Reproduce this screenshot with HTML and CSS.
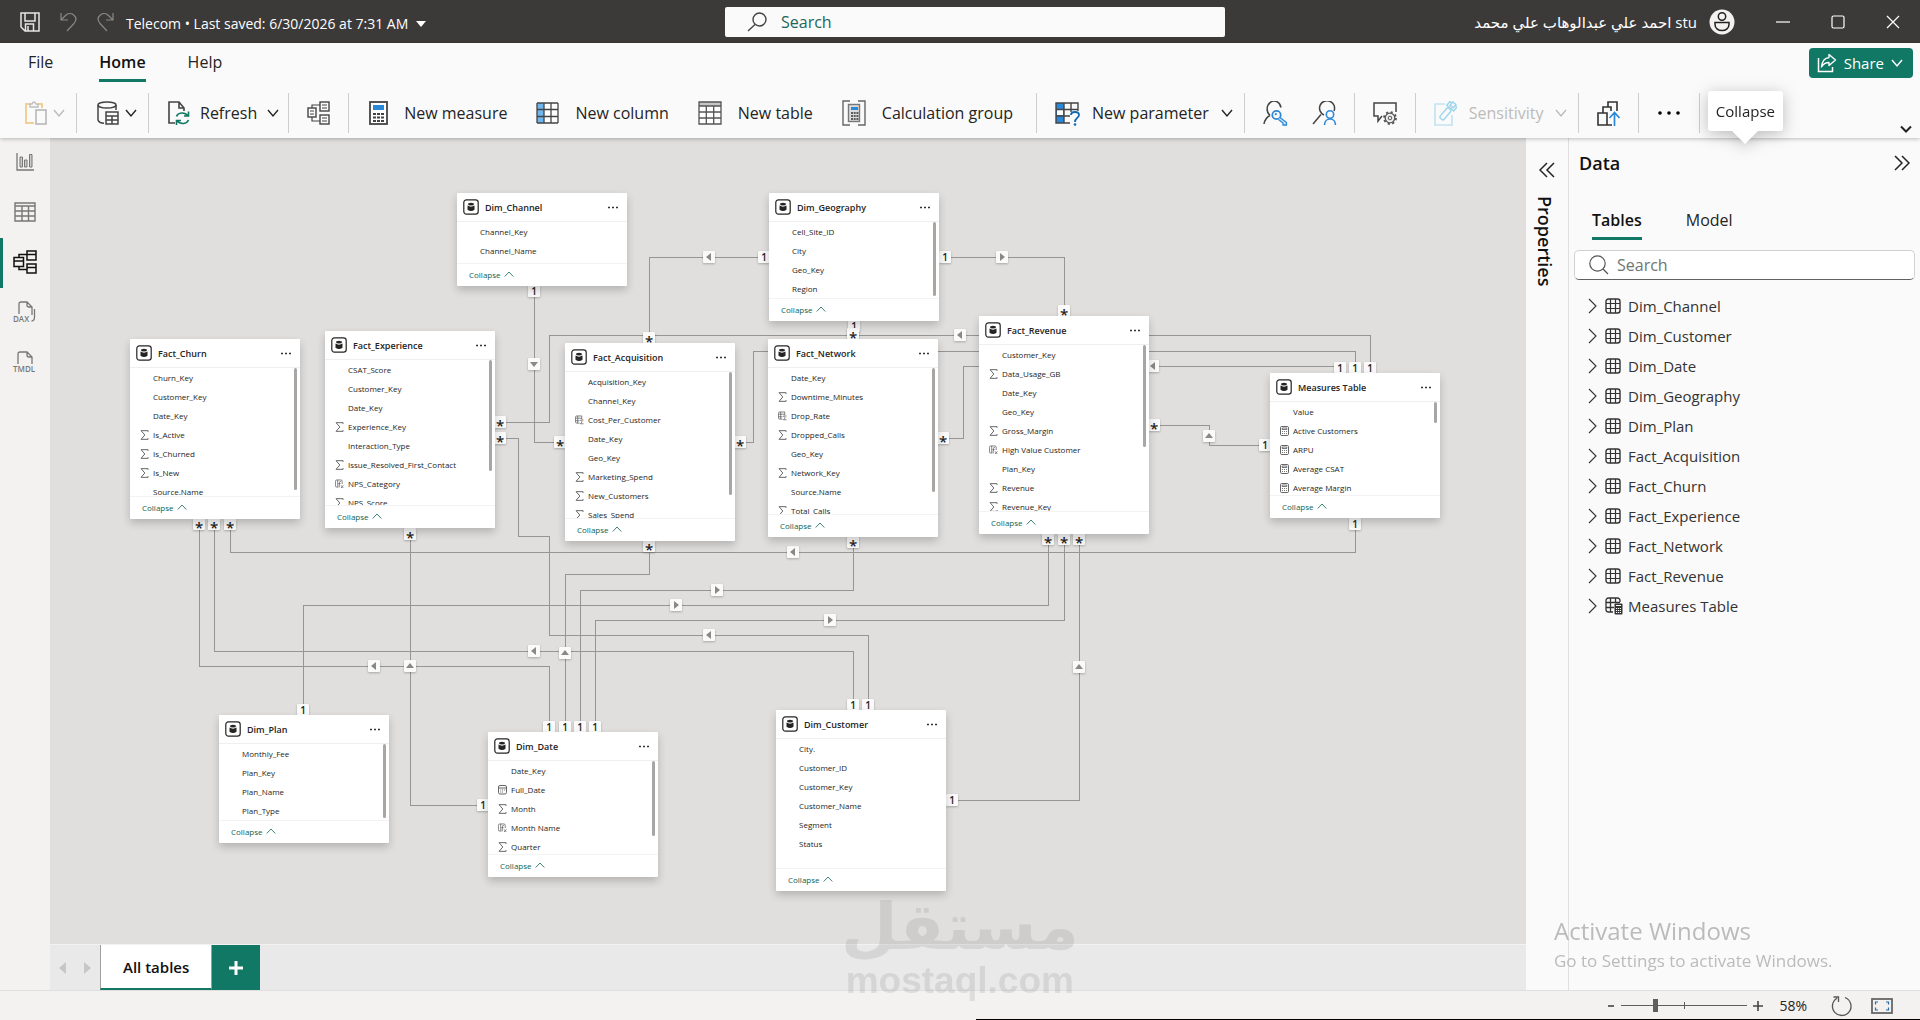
FILE: index.html
```html
<!DOCTYPE html>
<html lang="en">
<head>
  <meta charset="UTF-8"/>
  <meta name="viewport" content="width=device-width,initial-scale=1.0"/>
  <title>Telecom - Model view</title>
  <link rel="stylesheet" href="styles.css">
</head>
<body>

  <!-- icons used more than once -->
  <svg class="sprite" aria-hidden="true">
    <symbol id="i-down" viewBox="0 0 12 12"><path d="M1 3l5 6 5-6" fill="none" stroke="currentColor" stroke-width="1.4"/></symbol>
    <symbol id="i-right" viewBox="0 0 10 16"><path d="M1 1l7 7-7 7" fill="none" stroke="currentColor" stroke-width="1.1"/></symbol>
    <symbol id="i-up" viewBox="0 0 10 6"><path d="M.7 5.5L5 1l4.3 4.5" fill="none" stroke="currentColor" stroke-width=".8"/></symbol>
    <symbol id="i-chevrons" viewBox="0 0 16 16"><path d="M1 1l7 7-7 7M8 1l7 7-7 7" fill="none" stroke="currentColor" stroke-width="1.5"/></symbol>
    <symbol id="i-grid" viewBox="0 0 16 16"><rect x="1" y="1" width="14" height="14" rx="2.5" fill="none" stroke="currentColor" stroke-width="1.4"/><path d="M5.500 1v14M10.500 1v14M1 5.500h14M1 10.500h14" fill="none" stroke="currentColor" stroke-width="1.2"/></symbol>
    <symbol id="i-grid-calc" viewBox="0 0 18 18"><path d="M8 15H3.500A2.500 2.500 0 0 1 1 12.500v-9A2.500 2.500 0 0 1 3.500 1h9A2.500 2.500 0 0 1 15 3.500V5M5.500 1v14M10.500 1v5M1 5.500h14M1 10.500h8" fill="none" stroke="currentColor" stroke-width="1.3"/><rect x="9.500" y="6.500" width="8" height="11" rx="1" fill="#333"/><path d="M11 8.500h5M11 11.500h1.200m.8 0h1.200m.8 0H16M11 13.500h1.200m.8 0h1.200m.8 0H16M11 15.500h1.200m.8 0h1.200m.8 0H16" stroke="#fff" stroke-width="1.1"/></symbol>
    <symbol id="i-table" viewBox="0 0 16 16"><rect x=".8" y=".8" width="14.400" height="14.400" rx="2.6" fill="none" stroke="currentColor" stroke-width="1.2"/><path d="M5 5.300a3 1.500 0 0 1 6 0 3 1.300 0 0 1-6 0zM4.500 6.600q3.500 2.200 7 0v4.200q-3.500 2.400-7 0z" fill="currentColor"/></symbol>
    <symbol id="i-sum" viewBox="0 0 8 9"><path d="M7.200 1.700V.6H.9L4.300 4.500.9 8.400h6.300V7.300" fill="none" stroke="currentColor" stroke-width=".8"/></symbol>
    <symbol id="i-calc" viewBox="0 0 9 10"><rect x=".5" y=".5" width="8" height="9" rx="1.2" fill="none" stroke="currentColor" stroke-width=".9"/><path d="M2.200 2h4.600v1.500H2.200zM2 5.500h1m1 0h1m1 0h1M2 7.500h1m1 0h1m1 0h1" fill="none" stroke="currentColor" stroke-width=".8"/></symbol>
    <symbol id="i-sumcol" viewBox="0 0 10 10"><path d="M5 8.500H2A1.500 1.500 0 0 1 .5 7V2A1.500 1.500 0 0 1 2 .5h5.500V4M3 .5v8M.5 3h7M.5 5.800H5M9.500 5H6l2 2-2 2.200h3.500" fill="none" stroke="currentColor" stroke-width=".8"/></symbol>
    <symbol id="i-fx" viewBox="0 0 10 10"><path d="M3 .5H2A1.500 1.500 0 0 0 .5 2v5A1.500 1.500 0 0 0 2 8.500h1v-8M3 .5h3.500A1.500 1.500 0 0 1 8 2v3M6.500 2.200Q5 1.800 5 3.500L4.500 9M3.800 4.500H6.200M6.700 6.500l2.600 3M9.300 6.500l-2.600 3" fill="none" stroke="currentColor" stroke-width=".8"/></symbol>
    <symbol id="i-date" viewBox="0 0 9 10"><rect x=".5" y=".5" width="8" height="8.500" rx="1.5" fill="none" stroke="currentColor" stroke-width=".9"/><path d="M.5 3h8M2.300 5h.9m.9 0H5m.9 0h.9M2.300 7h.9m.9 0H5" stroke="currentColor" stroke-width=".9"/></symbol>
  </svg>

  <header class="titlebar">
    <div class="quick">
      <button aria-label="Save"><svg width="20" height="20" viewBox="0 0 20 20"><path d="M1 1h18v18H5l-4-4zM5 1v8h10V1M5.500 19v-7h8v7M8 14v5" fill="none" stroke="#e6e6e6" stroke-width="1.5"/></svg></button>
      <button aria-label="Undo"><svg width="17" height="20" viewBox="0 0 17 20"><path d="M1 1v7h7M1.500 7.500l4-4c5-5 14 1 8.500 8L7 19" fill="none" stroke="#8a8886" stroke-width="1.2"/></svg></button>
      <button aria-label="Redo"><svg width="17" height="20" viewBox="0 0 17 20"><path d="M16 1v7H9M15.500 7.500l-4-4c-5-5-14 1-8.500 8l7 7.500" fill="none" stroke="#8a8886" stroke-width="1.2"/></svg></button>
      <button class="doc-name">Telecom • Last saved: 6/30/2026 at 7:31 AM <svg width="10" height="6" viewBox="0 0 10 6"><path d="M0 0h10L5 6z" fill="#fff"/></svg></button>
    </div>
    <label class="top-search">
      <svg width="20" height="20" viewBox="0 0 20 20"><circle cx="12.500" cy="7.500" r="6.500" fill="none" stroke="#444" stroke-width="1.4"/><path d="M8 12.500L1 19" stroke="#444" stroke-width="1.4"/></svg>
      <input type="text" placeholder="Search" aria-label="Search">
    </label>
    <div class="account">
      <span class="user" dir="ltr">‎احمد علي عبدالوهاب علي محمد stu</span>
      <svg width="26" height="26" viewBox="0 0 26 26"><circle cx="13" cy="13" r="12.500" fill="#f3f2f1"/><circle cx="13" cy="7.500" r="3.700" fill="none" stroke="#222" stroke-width="1.5"/><path d="M6 13.500h14v2c0 3.500-3 6-7 6s-7-2.500-7-6z" fill="none" stroke="#222" stroke-width="1.5"/></svg>
      <button aria-label="Minimize"><svg width="14" height="14" viewBox="0 0 14 14"><path d="M0 7h14" stroke="#fff" stroke-width="1.2"/></svg></button>
      <button aria-label="Maximize"><svg width="14" height="14" viewBox="0 0 14 14"><rect x="1" y="1" width="12" height="12" rx="1.5" fill="none" stroke="#fff" stroke-width="1.2"/></svg></button>
      <button aria-label="Close"><svg width="14" height="14" viewBox="0 0 14 14"><path d="M1 1l12 12M13 1L1 13" stroke="#fff" stroke-width="1.2"/></svg></button>
    </div>
  </header>

  <div class="ribbon">
    <nav class="menu">
      <a href="#file">File</a>
      <a href="#home" class="active">Home</a>
      <a href="#help">Help</a>
      <button class="share">
        <svg width="20" height="20" viewBox="0 0 20 20"><path d="M1.500 5v13.500h14V14" fill="none" stroke="#fff" stroke-width="1.5"/><path d="M12 1.500l6.500 5.500-6.500 5.500V9.500c-3.500 0-5.500 1-7.500 4.500C5 8.500 7.500 5 12 4.600z" fill="none" stroke="#fff" stroke-width="1.4" stroke-linejoin="round"/></svg>
        Share
        <svg class="down"><use href="#i-down"/></svg>
      </button>
    </nav>

    <div class="toolbar">
      <div class="group first off">
        <button aria-label="Paste">
          <svg width="22" height="24" viewBox="0 0 22 24"><path d="M9 22H1V3h4M13 3h4v4" fill="none" stroke="#f2cf94" stroke-width="2"/><path d="M5 6V3h2q2-4 4 0h2v3z" fill="none" stroke="#bdbdbd" stroke-width="1.3"/><rect x="11" y="9" width="10" height="14" fill="#fafafa" stroke="#b3b3b3" stroke-width="1.5"/></svg>
          <svg class="down"><use href="#i-down"/></svg>
        </button>
      </div>
      <div class="group tight">
        <button aria-label="Get data">
          <svg width="22" height="24" viewBox="0 0 22 24"><g fill="none" stroke="#444" stroke-width="1.5"><ellipse cx="10" cy="4" rx="9" ry="3"/><path d="M1 4v15q1 3 6 3.300M19 4v5"/><path d="M9 11h12v12H9zM9 15h12M9 19h12M15 15v8" fill="#fafafa"/></g></svg>
          <svg class="down"><use href="#i-down"/></svg>
        </button>
      </div>
      <div class="group snug">
        <button>
          <svg width="22" height="25" viewBox="0 0 22 25"><path d="M7 22H1V1h10l5 6v3M11 1v6h5" fill="none" stroke="#444" stroke-width="1.6"/><path d="M8.500 15.500c1.500-4 8-5 11.500-.5M20.500 10.500V15H16M20.500 19c-1.500 4-8 5-11.500.5M8.500 24v-4.500H13" fill="none" stroke="#117865" stroke-width="1.6"/></svg>
          <span>Refresh</span>
          <svg class="down"><use href="#i-down"/></svg>
        </button>
      </div>
      <div class="group">
        <button aria-label="Manage relationships">
          <svg width="23" height="24" viewBox="0 0 23 24"><g fill="none" stroke="#444" stroke-width="1.4"><rect x="1" y="7" width="8" height="9"/><rect x="13" y="1" width="9" height="9"/><rect x="13" y="14" width="9" height="9"/><path d="M5 7V4h8M5 16v4h8M3 10h4M3 13h4M15 4h5M15 7h5M15 17h5M15 20h5" stroke-width="1.2"/></g></svg>
        </button>
      </div>
      <div class="group wide">
        <button>
          <svg width="19" height="24" viewBox="0 0 19 24"><rect x="1" y="1" width="17" height="22" fill="#fff" stroke="#444" stroke-width="1.8"/><rect x="4" y="4" width="11" height="5" fill="#2b88d8"/><path d="M4 13h3m1 0h3m1 0h3M4 16.500h3m1 0h3m1 0h3M4 20h3m1 0h3m1 0h3" stroke="#444" stroke-width="2.2"/></svg>
          <span>New measure</span>
        </button>
        <button>
          <svg width="23" height="22" viewBox="0 0 23 22"><rect x="1" y="1" width="21" height="20" fill="#fff"/><rect x="1" y="1" width="7" height="20" fill="#71b7ee"/><path d="M1 1v20M8 1v20M15 1v20M22 1v20M1 1h21M1 7.500h21M1 14.500h21M1 21h21" stroke="#444" stroke-width="1.3"/></svg>
          <span>New column</span>
        </button>
        <button>
          <svg width="24" height="24" viewBox="0 0 24 24"><rect x="1" y="1" width="22" height="22" fill="#fff"/><rect x="1" y="1" width="22" height="4" fill="#c8c6c4"/><path d="M1 1h22v22H1zM1 5h22M1 11h22M1 17h22M8.300 5v18M15.700 5v18" fill="none" stroke="#555" stroke-width="1.3"/></svg>
          <span>New table</span>
        </button>
        <button>
          <svg width="24" height="26" viewBox="0 0 24 26"><path d="M8 1H1v24h7M16 1h7v24h-7" fill="none" stroke="#666" stroke-width="1.4"/><rect x="6.500" y="4.500" width="11" height="17" fill="#ddd" stroke="#777" stroke-width="1.4"/><rect x="9" y="7" width="7" height="3" fill="#2b88d8"/><path d="M9 13h2m.7 0h2m.7 0h2M9 16h2m.7 0h2m.7 0h2M9 19h2m.7 0h2m.7 0h2" stroke="#333" stroke-width="1.7"/></svg>
          <span>Calculation group</span>
        </button>
      </div>
      <div class="group mid">
        <button>
          <svg width="25" height="25" viewBox="0 0 25 25"><rect x="1" y="2" width="8" height="20" fill="#2b88d8"/><rect x="2" y="9" width="6" height="5" fill="#fff"/><path d="M15 22H1V2h22v8M9 2v20M16 2v9M1 8.500h22M1 15h14" fill="none" stroke="#444" stroke-width="1.4"/><path d="M16 14c0-4 8-4 8 0 0 3-4 3-4 7" fill="none" stroke="#1168b3" stroke-width="1.8"/><circle cx="20" cy="23.500" r="1.300" fill="#1168b3"/></svg>
          <span>New parameter</span>
          <svg class="down"><use href="#i-down"/></svg>
        </button>
      </div>
      <div class="group pair">
        <button aria-label="Manage roles">
          <svg width="25" height="25" viewBox="0 0 25 25"><path d="M7 14.500a7 8 0 1 1 11-8M7 14.500Q2 17 1 23" fill="none" stroke="#444" stroke-width="1.5"/><circle cx="13.500" cy="14" r="4.200" fill="#fafafa" stroke="#2b88d8" stroke-width="1.8"/><path d="M17 16.500l6.500 5V24H20v-2l-4.500-3.500" fill="#cfe6f8" stroke="#2b88d8" stroke-width="1.3"/><circle cx="12.800" cy="13.200" r="1.100" fill="#2b88d8"/></svg>
        </button>
        <button aria-label="View as">
          <svg width="25" height="25" viewBox="0 0 25 25"><path d="M9 13.500L1 23M12 14A7.500 7.500 0 1 1 22 10" fill="none" stroke="#444" stroke-width="1.5"/><circle cx="18" cy="13.500" r="3.700" fill="none" stroke="#2b88d8" stroke-width="1.6"/><path d="M12.500 24c0-8 11-8 11 0" fill="none" stroke="#2b88d8" stroke-width="1.6"/></svg>
        </button>
      </div>
      <div class="group">
        <button aria-label="Q&amp;A setup">
          <svg width="24" height="24" viewBox="0 0 24 24"><path d="M9 15l-4 5v-5H1V2h22v9" fill="none" stroke="#444" stroke-width="1.5"/><circle cx="17" cy="17" r="4.800" fill="#eee" stroke="#555" stroke-width="1.3"/><circle cx="17" cy="17" r="1.800" fill="none" stroke="#555"/><circle cx="17" cy="17" r="6" fill="none" stroke="#555" stroke-width="1.8" stroke-dasharray="2.2 2.5"/></svg>
        </button>
      </div>
      <div class="group mid off">
        <button disabled>
          <svg width="23" height="25" viewBox="0 0 23 25"><path d="M11 3H1v21h17V14" fill="none" stroke="#c3e3ef" stroke-width="1.7"/><g transform="rotate(40 13 11)" fill="none" stroke="#9fd6ec" stroke-width="1.5"><rect x="10.500" y="7" width="5" height="13" rx="1.500"/><path d="M8.500 6V1h2.500v3h4V1h2.500v5zM11 1v-1.500h4V1"/></g></svg>
          <span>Sensitivity</span>
          <svg class="down"><use href="#i-down"/></svg>
        </button>
      </div>
      <div class="group">
        <button aria-label="Publish">
          <svg width="23" height="25" viewBox="0 0 23 25"><path d="M10 12H1v12h9zM6 12V6h8v4M11 6V1h9v9M10 12v12h5M10 24V12" fill="none" stroke="#333" stroke-width="1.6"/><path d="M17.500 25V12M12.500 17l5-5.500 5 5.500" fill="none" stroke="#2b88d8" stroke-width="1.7"/></svg>
        </button>
      </div>
      <div class="group">
        <button aria-label="More options"><svg width="24" height="6" viewBox="0 0 24 6"><circle cx="3" cy="3" r="1.800"/><circle cx="12" cy="3" r="1.800"/><circle cx="21" cy="3" r="1.800"/></svg></button>
      </div>
      <button class="fold" aria-label="Fold ribbon"><svg width="12" height="8" viewBox="0 0 12 8"><path d="M1 1.500l5 5 5-5" fill="none" stroke="#222" stroke-width="2"/></svg></button>
    </div>
    <div class="tooltip" role="tooltip">Collapse</div>
  </div>

  <main class="main">
    <nav class="rail">
      <a href="#report" aria-label="Report view"><svg width="18" height="18" viewBox="0 0 18 18"><path d="M1 0v17h17" fill="none" stroke="#777" stroke-width="1.3"/><path d="M4 4h2.500v10H4zM8.500 7H11v7H8.500zM13.500 1.500H16V14h-2.500z" fill="#ccc" stroke="#777"/></svg></a>
      <a href="#table" aria-label="Table view"><svg width="22" height="20" viewBox="0 0 22 20"><path d="M1 1h20v18H1zM1 4h20M1 9h20M1 14h20M8 4v15M14.500 4v15" fill="none" stroke="#777" stroke-width="1.4"/></svg></a>
      <a href="#model" class="active" aria-label="Model view"><svg width="24" height="24" viewBox="0 0 24 24"><path d="M1 7.500h9.500v9H1zM1 11h9.500M14 1h9v9h-9zM14 4.500h9M14 14h9v9h-9zM14 17.500h9M6 7.500v-3h8M6 16.500v3h8" fill="none" stroke="#111" stroke-width="1.5"/></svg></a>
      <a href="#dax" aria-label="DAX query view"><svg width="24" height="22" viewBox="0 0 24 22"><path d="M6 13V3q0-2 2-2h6l5 5v8M14 1v3q0 2 2 2h3M21.500 8v8q0 4-3 4" fill="none" stroke="#777" stroke-width="1.3"/><text x="0" y="21">DAX</text></svg></a>
      <a href="#tmdl" aria-label="TMDL view"><svg width="24" height="22" viewBox="0 0 24 22"><path d="M5 13V3q0-2 2-2h7l5 5v7M14 1v3q0 2 2 2h3" fill="none" stroke="#777" stroke-width="1.3"/><text x="0" y="21">TMDL</text></svg></a>
    </nav>

    <section class="workspace">
      <div class="canvas" id="canvas">
        <svg class="wires" id="wires"></svg>
      </div>
      <div class="sheets">
        <button class="step" aria-label="Previous"><svg width="7" height="12" viewBox="0 0 7 12"><path d="M7 0v12L0 6z"/></svg></button>
        <button class="step" aria-label="Next"><svg width="7" height="12" viewBox="0 0 7 12"><path d="M0 0v12l7-6z"/></svg></button>
        <button class="sheet">All tables</button>
        <button class="add" aria-label="Add layout"><svg width="14" height="14" viewBox="0 0 14 14"><path d="M7 0v14M0 7h14" stroke="#fff" stroke-width="3"/></svg></button>
      </div>
    </section>

    <aside class="props">
      <button aria-label="Expand properties"><svg class="flip" width="16" height="16"><use href="#i-chevrons"/></svg></button>
      <h2>Properties</h2>
    </aside>

    <aside class="data">
      <div class="data-head">
        <h2>Data</h2>
        <button aria-label="Collapse pane"><svg width="16" height="16"><use href="#i-chevrons"/></svg></button>
      </div>
      <div class="data-tabs">
        <a href="#tables" class="active">Tables</a>
        <a href="#model-tab">Model</a>
      </div>
      <label class="data-search">
        <svg width="20" height="20" viewBox="0 0 20 20"><circle cx="8.500" cy="8.500" r="7.700" fill="none" stroke="#555" stroke-width="1.2"/><path d="M14 14l5 5" stroke="#555" stroke-width="1.3"/></svg>
        <input type="text" placeholder="Search" aria-label="Search tables">
      </label>
      <ul class="tree" id="tree"></ul>
    </aside>
  </main>

  <footer class="status">
    <button aria-label="Zoom out"><svg width="8" height="12" viewBox="0 0 8 12"><path d="M1 6h6" stroke="#444" stroke-width="1.6"/></svg></button>
    <input type="range" min="0" max="100" value="26" aria-label="Zoom">
    <button aria-label="Zoom in"><svg width="10" height="12" viewBox="0 0 10 12"><path d="M0 6h10M5 1v10" stroke="#444" stroke-width="1.6"/></svg></button>
    <output>58%</output>
    <button aria-label="Reset zoom"><svg width="22" height="22" viewBox="0 0 22 22"><path d="M14 2.500A9.300 9.300 0 1 1 6 3.200M2.500 2h5v5" fill="none" stroke="#555" stroke-width="1.3"/></svg></button>
    <button aria-label="Fit to page"><svg width="22" height="16" viewBox="0 0 22 16"><rect x="1" y="1" width="20" height="14" fill="none" stroke="#666" stroke-width="1.8"/><path d="M4.500 6.500V4H7M15 4h2.500v2.500M17.500 9.500V12H15M7 12H4.500V9.500" fill="none" stroke="#2b6ca8" stroke-width="1.2"/></svg></button>
  </footer>

  <div class="brand">
    <span class="brand-ar" lang="ar">مستقل</span>
    <span class="brand-en">mostaql.com</span>
  </div>
  <div class="activate">
    <p class="activate-title">Activate Windows</p>
    <p>Go to Settings to activate Windows.</p>
  </div>

  <script src="script.js"></script>
</body>
</html>
```
FILE: styles.css
```css
:root {
  --green:  #117865;
  --dark:   #3b3a39;
  --pane:   #fafafa;
  --rail:   #f3f2f1;
  --canvas: #e0dfde;
  --line:   #e1dfdd;
  --fg:     #252423;
}
*,*::before,*::after { box-sizing:border-box; margin:0; padding:0 }
body {
  height:100vh;
  display:flex; flex-direction:column;
  overflow:hidden;
  background:var(--pane);
  color:var(--fg);
  font-family:"Open Sans", "Noto Sans", sans-serif;
  font-size:16px;
}
button {
  display:flex; align-items:center;
  border:none; background:none;
  font:inherit; color:inherit; cursor:pointer;
}
a { color:inherit; text-decoration:none }
ul { list-style:none }
input { font:inherit; border:none; background:none; outline:none; min-width:0 }
svg { flex:none; display:block }
h2 { font-size:18px; line-height:24px; font-weight:600; color:#111 }
.sprite { position:absolute; width:0; height:0 }
.down { width:12px; height:12px }

/* title bar */
.titlebar {
  flex:none;
  display:grid; grid-template-columns:705fr 500px 675fr;
  align-items:center;
  height:43px;
  padding:0 20px;
  background:var(--dark);
  color:#fff;
  font-size:14px;
}
.quick { display:flex; align-items:center; gap:20px }
.doc-name { gap:8px; padding-top:4px; margin-left:-8px; white-space:nowrap }
.top-search {
  display:flex; align-items:center; gap:14px;
  height:30px; padding:0 22px;
  background:var(--pane); border-radius:2px;
}
.top-search input { flex:1 }
.top-search input { font-size:16px }
.top-search input::placeholder { color:#1c665a; opacity:1 }
.account { display:flex; align-items:center; justify-content:flex-end; gap:41px }
.account .user { margin-right:-29px; font-size:15px; font-family:"Open Sans", "DejaVu Sans", sans-serif; white-space:nowrap }

/* ribbon */
.ribbon {
  position:relative; z-index:5;
  flex:none; height:95px;
  background:var(--pane);
  box-shadow:0 1px 4px rgba(0,0,0,.25);
}
.menu {
  display:flex; align-items:center; gap:42px;
  height:40px; padding:0 7px 0 28px;
  color:var(--fg);
}
.menu a { padding:6px 0; border-bottom:3px solid transparent }
.menu a:first-child { margin-right:4px }
.menu .active { border-color:var(--green); font-weight:600; color:#111 }
.share {
  gap:7px; height:30px; margin-left:auto; padding:0 10px 0 8px;
  background:var(--green); color:#fff;
  border-radius:4px; font-size:15px;
}
.toolbar { display:flex; align-items:center; height:55px; padding:5px 8px 0 0 }
.group {
  display:flex; align-items:center; gap:29px;
  height:40px; padding:0 18px;
  border-right:1px solid #d0cecc;
}
.group button { gap:13px; white-space:nowrap }
.group.first { padding:0 11px 0 25px }
.group.first button, .group.tight button { gap:6px }
.group.tight { padding:0 11px 0 20px }
.group.snug { padding:0 9px 0 19px }
.group.snug button { gap:10px }
.group.wide { padding:0 23px 0 20px }
.group.wide button { gap:16px }
.group.mid { padding:0 11px 0 18px }
.group.mid button { gap:12px }
.group.pair { padding:0 17px 0 18px; gap:24px }
.group.off { color:#bdbbb9 }
.fold { align-self:flex-end; margin-left:auto; padding-bottom:5px }
.tooltip {
  position:absolute; right:137px; top:48px;
  padding:8px 8px;
  background:#fff; border-radius:3px;
  line-height:24px; font-size:15px;
  filter:drop-shadow(0 3px 8px rgba(0,0,0,.25));
}
.tooltip::after {
  content:""; position:absolute; left:50%; top:100%;
  margin-left:-13px;
  border:13px solid transparent; border-top-color:#fff; border-bottom:none;
}

/* layout */
.main { flex:1; display:flex; min-height:0 }
.rail { flex:none; width:50px; background:var(--rail) }
.rail a {
  display:flex; align-items:center; justify-content:center;
  height:50px; border-left:3px solid transparent; padding:0 3px 3px 0;
}
.rail a.active { border-color:var(--green) }
.rail svg { overflow:visible }
.rail text { font-size:8px; font-weight:600; fill:#777 }
.workspace { flex:1; display:flex; flex-direction:column; min-width:0 }
.canvas { position:relative; flex:1; overflow:hidden; background:var(--canvas) }
.wires { position:absolute; left:0; top:0; width:100%; height:100% }
.wires path { fill:none; stroke:#979593; shape-rendering:crispEdges }
.wires rect { fill:#fafafa; filter:drop-shadow(0 1px 1px rgba(0,0,0,.25)) }
.wires text { font-size:10px; font-weight:600; text-anchor:middle; fill:#252423 }
.wires text.star { font-size:15px }
.wires polygon { fill:#8a8886 }

/* table cards */
.card {
  position:absolute;
  width:170px;
  display:flex; flex-direction:column;
  background:#fff; border-radius:1px;
  box-shadow:0 4px 9px rgba(0,0,0,.2);
}
.card header {
  display:flex; align-items:center; gap:6px;
  height:29px; padding:0 9px 0 6px;
  border-bottom:1px solid #efefef;
}
.card h3 { flex:1; font-size:9px; line-height:12px; font-weight:600; padding-top:1px }
.card .body { flex:1; display:flex; min-height:0; padding-right:3px }
.card ul { flex:1; overflow:hidden; padding-left:10px }
.card li {
  display:flex; align-items:center; gap:4px;
  height:19px; font-size:8px; white-space:nowrap; color:#252423;
}
.card li svg, .card li i { flex:none; width:9px; height:10px; color:#555 }
.card .bar { width:3px; background:#a8a6a4; border-radius:2px }
.card footer { height:23px; padding-left:12px; border-top:1px solid #f3f3f3 }
.card footer button { gap:3px; height:20px; font-size:8px; color:#0b6354 }

/* layout tabs */
.sheets {
  display:flex; flex:none; height:46px;
  background:#e9e9e9; border-top:1px solid #f3f2f1;
}
.step { width:25px; justify-content:center; fill:#c8c6c4 }
.sheet {
  padding:0 22px; background:#fff;
  border:1px solid #a19f9d; border-width:0 1px 2px; border-bottom-color:var(--green);
  font-size:15px; font-weight:600; color:#111;
}
.add { width:48px; justify-content:center; background:var(--green) }

/* side panes */
.props {
  flex:none; width:43px;
  display:flex; flex-direction:column; align-items:center; gap:18px;
  padding-top:24px;
  border-right:1px solid var(--line);
}
.props h2 { writing-mode:vertical-rl; margin-right:4px }
.flip { transform:scaleX(-1) }
.data { flex:none; width:351px; padding:0 5px }
.data-head {
  display:flex; justify-content:space-between; align-items:center;
  height:50px; padding:0 5px;
}
.data-tabs { display:flex; gap:44px; padding:14px 18px 10px }
.data-tabs a { height:38px; line-height:36px; border-bottom:3px solid transparent }
.data-tabs .active { border-color:var(--green); font-weight:600; color:#111 }
.data-search {
  display:flex; align-items:center; gap:8px;
  height:30px; padding:0 14px;
  background:#fff;
  border:1px solid #d1d1d1; border-bottom-color:#616161; border-radius:5px;
}
.data-search input { flex:1 }
.data-search input::placeholder { color:#6d7674; opacity:1 }
.tree { padding:11px 14px }
.tree button { height:30px; gap:7px; font-size:15px; color:#333 }
.tree .chev { width:10px; height:16px }
.tree .ico { width:16px; height:16px }
.tree .ico.big { width:18px; height:18px; margin-right:-2px }

/* status bar */
.status {
  position:relative;
  flex:none; height:30px;
  display:flex; align-items:center; justify-content:flex-end; gap:6px;
  padding-right:27px;
  background:var(--rail); border-top:1px solid var(--line);
  font-size:14px;
}
.status::after {
  content:""; position:absolute; right:0; bottom:0;
  width:944px; height:1px; background:#000;
}
.status output { margin:0 18px 0 10px }
.status button + button { margin-left:12px }
.status input {
  appearance:none; width:126px; height:14px;
  background:
    linear-gradient(#605e5c,#605e5c) 50% 50%/1px 7px no-repeat,
    linear-gradient(#605e5c,#605e5c) 50% 50%/100% 1px no-repeat;
}
.status input::-webkit-slider-thumb {
  appearance:none; width:5px; height:13px; background:#605e5c;
}

/* marks laid over the window */
.brand, .activate { position:fixed; z-index:10; pointer-events:none }
.brand {
  left:44%; bottom:18px; width:230px;
  display:flex; flex-direction:column; align-items:center;
  white-space:nowrap;
  color:#777; opacity:.17;
}
.brand-ar { font:bold 65px/66px "DejaVu Sans", sans-serif }
.brand-en { font:bold 37px/42px "Liberation Sans", sans-serif }
.activate { right:60px; bottom:47px; width:306px; color:#bbb; font-size:17px; line-height:24px }
.activate-title { font-size:24px; line-height:36px }
```
FILE: script.js
```js
// field prefix: s = sum, c = sum column, f = fx column, m = measure, d = date
const tables = [
  { name:'Dim_Channel', x:407, y:55, h:93, bar:0, fields:['Channel_Key','Channel_Name'] },
  { name:'Dim_Geography', x:719, y:55, h:128, bar:74, fields:['Cell_Site_ID','City','Geo_Key','Region'] },
  { name:'Fact_Churn', x:80, y:201, h:180, bar:122,
    fields:['Churn_Key','Customer_Key','Date_Key','s:Is_Active','s:Is_Churned','s:Is_New','Source.Name'] },
  { name:'Fact_Experience', x:275, y:193, h:197, bar:111,
    fields:['CSAT_Score','Customer_Key','Date_Key','s:Experience_Key','Interaction_Type','s:Issue_Resolved_First_Contact','f:NPS_Category','s:NPS_Score'] },
  { name:'Fact_Acquisition', x:515, y:205, h:198, bar:123,
    fields:['Acquisition_Key','Channel_Key','c:Cost_Per_Customer','Date_Key','Geo_Key','s:Marketing_Spend','s:New_Customers','s:Sales_Spend'] },
  { name:'Fact_Network', x:718, y:201, h:198, bar:124,
    fields:['Date_Key','s:Downtime_Minutes','c:Drop_Rate','s:Dropped_Calls','Geo_Key','s:Network_Key','Source.Name','s:Total_Calls'] },
  { name:'Fact_Revenue', x:929, y:178, h:218, bar:102,
    fields:['Customer_Key','s:Data_Usage_GB','Date_Key','Geo_Key','s:Gross_Margin','f:High Value Customer','Plan_Key','s:Revenue','s:Revenue_Key'] },
  { name:'Measures Table', x:1220, y:235, h:145, bar:21,
    fields:['Value','m:Active Customers','m:ARPU','m:Average CSAT','m:Average Margin'] },
  { name:'Dim_Plan', x:169, y:577, h:128, bar:74, fields:['Monthly_Fee','Plan_Key','Plan_Name','Plan_Type'] },
  { name:'Dim_Date', x:438, y:594, h:145, bar:75, fields:['Date_Key','d:Full_Date','s:Month','f:Month Name','s:Quarter'] },
  { name:'Dim_Customer', x:726, y:572, h:181, bar:0,
    fields:['City.','Customer_ID','Customer_Key','Customer_Name','Segment','Status'] }
];

const wires = [
  'M484 148V304H510', 'M719 119H599V205', 'M890 119H1014V178',
  'M1320 235V197H499V284H450', 'M1305 235V213H703V304H690', 'M1290 228H913V300H890',
  'M1099 287H1159V307H1220', 'M1305 380V414H180V380', 'M149 380V528H499V594',
  'M164 380V513H803V572', 'M360 390V667H438', 'M445 300H468V398H499V497H818V572',
  'M599 402V436H515V594', 'M803 398V452H530V594', 'M998 396V467H253V577',
  'M1014 396V482H545V594', 'M1029 396V662H896'
];

const marks = {
  '1': [[484,153],[714,119],[895,119],[804,188],[1320,230],[1305,230],[1290,230],[1215,307],[1305,386],
        [499,589],[803,567],[433,667],[818,567],[515,589],[530,589],[253,572],[545,589],[902,662]],
  '*': [[510,304],[599,200],[1014,173],[803,196],[450,284],[690,304],[893,300],[1104,287],[180,386],
        [149,386],[164,386],[360,396],[450,300],[599,408],[803,404],[998,401],[1014,401],[1029,401]],
  left:  [[659,119],[910,197],[1103,228],[743,414],[324,528],[484,513],[659,497]],
  right: [[952,119],[667,452],[626,467],[780,482]],
  up:    [[1159,298],[360,528],[515,515],[1029,529]],
  down:  [[484,226]]
};
const arrows = {
  left:'2,-4 2,4 -3,0', right:'-2,-4 -2,4 3,0', up:'-4,2 4,2 0,-3', down:'-4,-2 4,-2 0,3'
};
const icons = { s:'sum', c:'sumcol', f:'fx', m:'calc', d:'date' };

function drawWires() {
  let out = wires.map(d => `<path d="${d}" transform="translate(.5 .5)"/>`).join('');
  for (const kind in marks) {
    marks[kind].forEach(([x, y]) => {
      let inner = `<polygon points="${arrows[kind]}"/>`;
      if (kind === '1') inner = '<text y="4">1</text>';
      if (kind === '*') inner = '<text class="star" y="9">*</text>';
      out += `<g transform="translate(${x} ${y})"><rect x="-6" y="-6" width="12" height="12" rx="1"/>${inner}</g>`;
    });
  }
  document.getElementById('wires').innerHTML = out;
}

function fieldRow(f) {
  const [kind, name] = f.includes(':') ? f.split(':') : ['', f];
  const icon = kind ? `<svg><use href="#i-${icons[kind]}"/></svg>` : '<i></i>';
  return `<li>${icon}${name}</li>`;
}

function drawCards() {
  const canvas = document.getElementById('canvas');
  tables.forEach(t => {
    const card = document.createElement('article');
    card.className = 'card';
    card.style.left = t.x + 'px';
    card.style.top = t.y + 'px';
    card.style.height = t.h + 'px';
    card.innerHTML = `
      <header>
        <svg width="16" height="16"><use href="#i-table"/></svg>
        <h3>${t.name}</h3>
        <button aria-label="More"><svg width="10" height="3" viewBox="0 0 10 3"><path d="M0 1.500h2m2 0h2m2 0h2" stroke="#333" stroke-width="1.6"/></svg></button>
      </header>
      <div class="body">
        <ul>${t.fields.map(fieldRow).join('')}</ul>
        ${t.bar ? `<div class="bar" style="height:${t.bar}px"></div>` : ''}
      </div>
      <footer><button>Collapse <svg width="10" height="6"><use href="#i-up"/></svg></button></footer>`;
    canvas.appendChild(card);
  });
}

function drawTree() {
  const names = tables.map(t => t.name).sort();
  document.getElementById('tree').innerHTML = names.map(n => {
    const calc = n === 'Measures Table';
    return `<li><button><svg class="chev"><use href="#i-right"/></svg>
      <svg class="ico ${calc ? 'big' : ''}"><use href="#i-grid${calc ? '-calc' : ''}"/></svg>${n}</button></li>`;
  }).join('');
}

drawWires();
drawCards();
drawTree();
```
